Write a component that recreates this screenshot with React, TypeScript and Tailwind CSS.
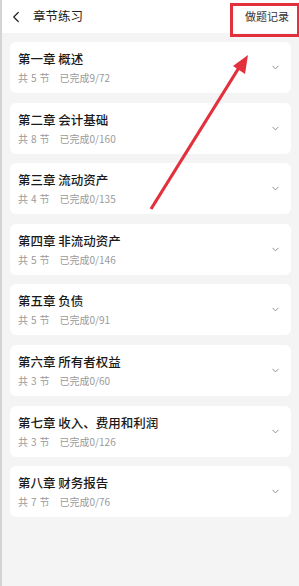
import { ChevronDown, ChevronLeft } from 'lucide-react';

const chapters = [
  { title: '第一章 概述', sections: 5, done: '9/72' },
  { title: '第二章 会计基础', sections: 8, done: '0/160' },
  { title: '第三章 流动资产', sections: 4, done: '0/135' },
  { title: '第四章 非流动资产', sections: 5, done: '0/146' },
  { title: '第五章 负债', sections: 5, done: '0/91' },
  { title: '第六章 所有者权益', sections: 3, done: '0/60' },
  { title: '第七章 收入、费用和利润', sections: 3, done: '0/126' },
  { title: '第八章 财务报告', sections: 7, done: '0/76' },
];

export default function App() {
  return (
    <div
      className="relative h-[586px] w-[299px] overflow-hidden border-l-2 border-l-[#d4d4d4] bg-[#f4f4f4]"
      style={{ fontFamily: '"Noto Sans CJK SC", "Noto Sans", sans-serif' }}
    >
      {/* header */}
      <div className="flex h-[33px] items-center justify-between bg-white pl-[5px] pr-[10px]">
        <div className="flex items-center">
          <ChevronLeft className="h-[18px] w-[18px] text-[#222]" strokeWidth={1.6} />
          <span className="ml-[8px] text-[12.5px] text-[#222]">章节练习</span>
        </div>
        <span className="text-[11px] text-[#333]">做题记录</span>
      </div>

      {/* chapter list */}
      <ul className="flex flex-col gap-[9.6px] px-[8px] pt-[9px]">
        {chapters.map((ch) => (
          <li
            key={ch.title}
            className="flex h-[51px] items-center justify-between rounded-[6px] bg-white pl-[8px] pr-[10px]"
          >
            <div className="flex flex-col">
              <span className="text-[12.5px] font-medium leading-[16px] text-[#1a1a1a]">{ch.title}</span>
              <span className="mt-[4px] flex text-[10px] leading-[13px] text-[#9a9a9a]">
                <span>共</span>
                <span className="ml-[3px]">{ch.sections}</span>
                <span className="ml-[3px]">节</span>
                <span className="ml-[10px]">已完成{ch.done}</span>
              </span>
            </div>
            <ChevronDown className="h-[11px] w-[11px] text-[#888]" strokeWidth={2} />
          </li>
        ))}
      </ul>

      {/* annotation overlay */}
      <div className="pointer-events-none absolute left-[228px] top-[3px] h-[34px] w-[70px] border-[3px] border-[#e3303d]" />
      <svg className="pointer-events-none absolute left-0 top-0" width="299" height="586">
        <line x1="149" y1="209" x2="238" y2="66" stroke="#e3303d" strokeWidth="3.2" />
        <polygon points="246,55 243,74 231,66" fill="#e3303d" />
      </svg>
    </div>
  );
}
